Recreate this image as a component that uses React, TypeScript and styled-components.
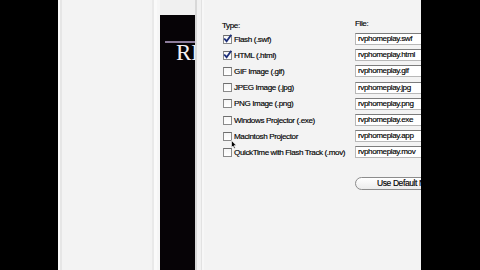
import React from "react";
import styled, { createGlobalStyle } from "styled-components";

const Global = createGlobalStyle`
  html, body { margin: 0; padding: 0; background: #000; }
  body { width: 480px; height: 270px; overflow: hidden; }
`;

const Page = styled.div`
  position: relative;
  display: flex;
  width: 480px;
  height: 270px;
  background: #000;
  overflow: hidden;
  font-family: "Liberation Sans", Arial, sans-serif;
`;

const BlackBar = styled.div<{ $w: number }>`
  width: ${(p) => p.$w}px;
  flex: none;
  background: #000;
`;

const SidePanel = styled.div`
  width: 99px;
  flex: none;
  background: #f3f3f3;
  border-left: 2px solid #fbfbfb;
  border-right: 3px solid #fafafa;
  box-shadow: inset 2px 0 0 #e6e6e6, inset -2px 0 0 #e9e9e9;
  box-sizing: border-box;
`;

const Gap = styled.div`
  width: 3px;
  flex: none;
  background: #f6f6f6;
`;

const MovieColumn = styled.div`
  width: 35px;
  flex: none;
  display: flex;
  flex-direction: column;
  background: #f0f0f0;
`;

const MovieTop = styled.div`
  height: 15px;
  flex: none;
`;

const MovieScreen = styled.div`
  flex: 1;
  background: #060306;
  overflow: hidden;
  padding-top: 26px;
  box-sizing: border-box;
`;

const PurpleLine = styled.div`
  margin-left: 5px;
  height: 2px;
  background: #8d7d9c;
`;

const Title = styled.div`
  margin-left: 16px;
  margin-top: -1px;
  font-family: "Liberation Serif", "Times New Roman", serif;
  font-size: 23px;
  line-height: 22px;
  color: #f4f0f4;
  white-space: nowrap;
`;

const Divider = styled.div`
  width: 9px;
  flex: none;
  background: #f7f7f7;
  box-shadow: inset 2px 0 0 #d8d8d8, inset 6px 0 0 #f1f1f1, inset 7px 0 0 #e2e2e2;
`;

const Dialog = styled.div`
  width: 217px;
  flex: none;
  background: #f3f3f3;
  overflow: hidden;
  padding: 19px 0 0 18px;
  box-sizing: border-box;
  color: #000;
  font-size: 8.1px;
  letter-spacing: -0.4px;
  -webkit-text-stroke: 0.15px #000;
`;

const Grid = styled.div`
  display: grid;
  grid-template-columns: 133px 110px;
  grid-template-rows: 12px;
  grid-auto-rows: 16.2px;
  align-items: center;
`;

const HeaderCell = styled.div<{ $dy: number }>`
  align-self: start;
  margin-top: ${(p) => p.$dy}px;
  white-space: nowrap;
`;

const Option = styled.div`
  display: flex;
  align-items: center;
  gap: 2px;
  white-space: nowrap;
  margin-left: 1px;
`;

const Box = styled.span`
  width: 7px;
  height: 7px;
  flex: none;
  border: 1px solid #8a8a8a;
  border-top-color: #6e6e6e;
  background: linear-gradient(#f6f6f6, #ffffff);
  display: inline-flex;
  align-items: center;
  justify-content: center;
`;

const Field = styled.div`
  height: 12px;
  box-sizing: border-box;
  background: #fff;
  border: 1px solid #b8b8b8;
  border-top-color: #7c7c7c;
  padding-left: 2px;
  line-height: 10px;
  white-space: nowrap;
  overflow: hidden;
`;

const ButtonRow = styled.div`
  margin-top: 16px;
  margin-left: 133px;
`;

const Pill = styled.div`
  width: 100px;
  height: 13px;
  box-sizing: border-box;
  border: 1px solid #8c8c8c;
  border-radius: 7px;
  background: linear-gradient(#ffffff, #ececec);
  padding-left: 21px;
  line-height: 11px;
  font-size: 8.5px;
  white-space: nowrap;
`;

const Cursor = styled.svg`
  position: absolute;
  left: 231px;
  top: 140px;
`;

const rows: [string, string, boolean][] = [
  ["Flash  (.swf)", "rvphomeplay.swf", true],
  ["HTML  (.html)", "rvphomeplay.html", true],
  ["GIF Image (.gif)", "rvphomeplay.gif", false],
  ["JPEG Image (.jpg)", "rvphomeplay.jpg", false],
  ["PNG Image (.png)", "rvphomeplay.png", false],
  ["Windows Projector (.exe)", "rvphomeplay.exe", false],
  ["Macintosh Projector", "rvphomeplay.app", false],
  ["QuickTime with Flash Track (.mov)", "rvphomeplay.mov", false],
];

const Check = () => (
  <svg width="9" height="9" viewBox="0 0 9 9" style={{ marginTop: -2, flex: "none" }}>
    <path d="M1.2 4.5 L3.6 7.2 L8.3 0.8" fill="none" stroke="#1d2f7a" strokeWidth="1.8" />
  </svg>
);

export default function App() {
  return (
    <Page>
      <Global />
      <BlackBar $w={58} />
      <SidePanel />
      <Gap />
      <MovieColumn>
        <MovieTop />
        <MovieScreen>
          <PurpleLine />
          <Title>RE</Title>
        </MovieScreen>
      </MovieColumn>
      <Divider />
      <Dialog>
        <Grid>
          <HeaderCell $dy={2}>Type:</HeaderCell>
          <HeaderCell $dy={0}>File:</HeaderCell>
          {rows.map(([label, file, on]) => (
            <React.Fragment key={label}>
              <Option>
                <Box>{on && <Check />}</Box>
                <span>{label}</span>
              </Option>
              <Field>{file}</Field>
            </React.Fragment>
          ))}
        </Grid>
        <ButtonRow>
          <Pill>Use Default Names</Pill>
        </ButtonRow>
      </Dialog>
      <BlackBar $w={59} />
      <Cursor width="6" height="9" viewBox="0 0 6 9">
        <path d="M0.5 0.5 L0.5 7.5 L2 6 L3.3 8.6 L4.3 8.1 L3.1 5.6 L5.3 5.6 Z" fill="#000" stroke="#fff" strokeWidth="0.6" />
      </Cursor>
    </Page>
  );
}
